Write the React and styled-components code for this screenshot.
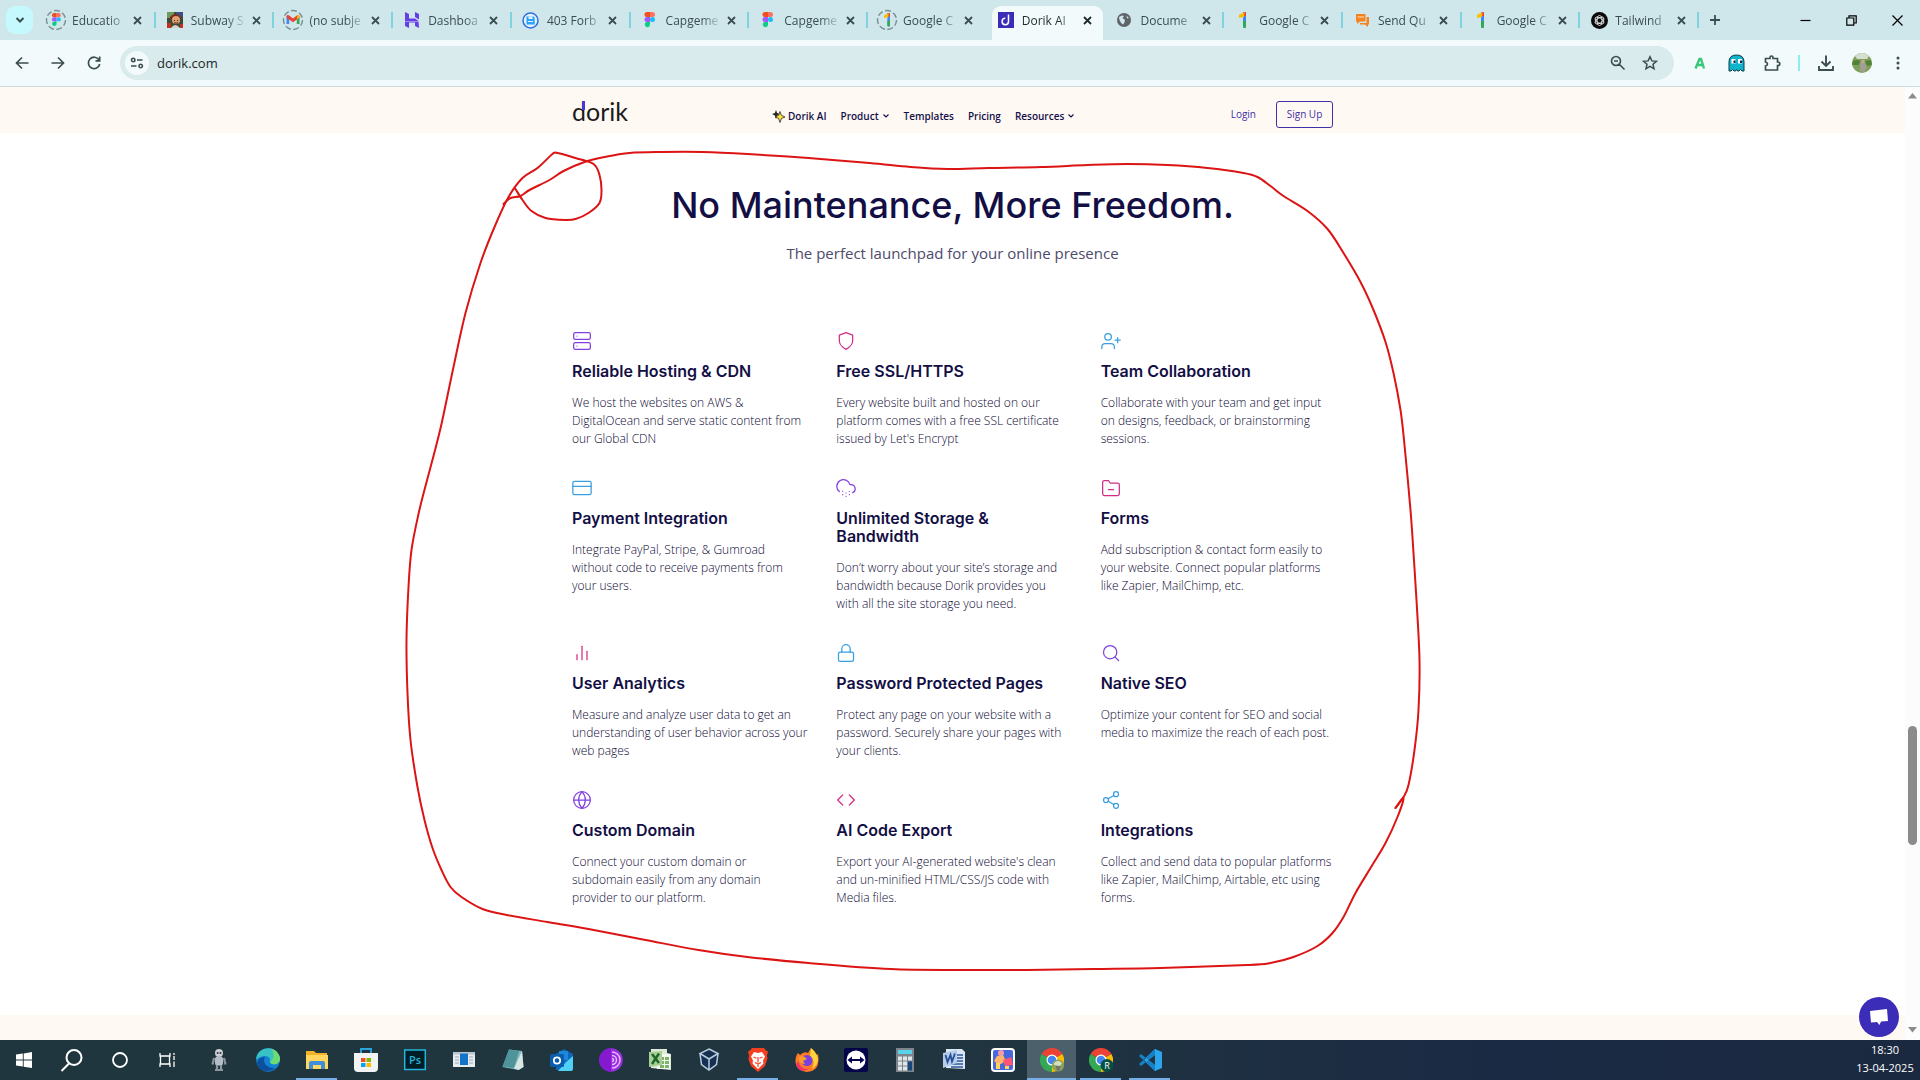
import React from "react";
import styled, { createGlobalStyle, css } from "styled-components";
import {
  FiServer, FiShield, FiUserPlus, FiCreditCard, FiCloudSnow, FiFolderMinus,
  FiBarChart2, FiLock, FiSearch, FiGlobe, FiCode, FiShare2,
} from "react-icons/fi";

const uiFont = `"Open Sans", "Noto Sans", sans-serif`;
const displayFont = `Inter, "Liberation Sans", sans-serif`;

const GlobalStyle = createGlobalStyle`
  *, *::before, *::after { box-sizing: border-box; }
  body { margin: 0; background: #fff; font-family: ${uiFont}; }
  button, input { font: inherit; color: inherit; border: 0; padding: 0; margin: 0; background: none; }
  a { color: inherit; text-decoration: none; }
  h1, h2, h3, p { margin: 0; }
  svg { display: block; flex: none; }
`;

const Desktop = styled.div`
  display: flex;
  flex-direction: column;
  height: 100vh;
  overflow: hidden;
`;

/* ---------- Browser chrome ---------- */

const TabStrip = styled.div`
  display: flex;
  flex: none;
  height: 40px;
  background: #cfe6ea;
  color: #3a4e51;
`;

const TabSearch = styled.button`
  display: grid;
  place-items: center;
  width: 27px;
  height: 28px;
  margin: 6px 4px 6px 6px;
  border-radius: 9px;
  background: #c6f9fd;
`;

const Tabs = styled.div`
  display: flex;
  flex: 1;
  min-width: 0;
`;

const TabItem = styled.div`
  position: relative;
  display: flex;
  align-items: center;
  flex: 1 1 0;
  min-width: 0;
  padding: 0 12px 0 8px;
  margin-top: ${(p) => (p.$active ? "6px" : "0")};
  padding-bottom: ${(p) => (p.$active ? "6px" : "0")};
  ${(p) =>
    p.$active &&
    css`
      color: #1d2b2e;
      &::before {
        content: "";
        position: absolute;
        z-index: 0;
        inset: 0 2px 0 5px;
        border-radius: 9px 9px 0 0;
        background: #f3fafb;
      }
    `}
  ${(p) =>
    p.$divided &&
    css`
      &::after {
        content: "";
        position: absolute;
        right: 0;
        top: 12px;
        width: 2px;
        height: 16px;
        background: #80d3dc;
      }
    `}
`;

const TabIcon = styled.span`
  position: relative;
  display: grid;
  place-items: center;
  width: 22px;
  height: 22px;
  margin-right: 5px;
`;

const TabTitle = styled.span`
  position: relative;
  flex: 1;
  min-width: 0;
  padding-top: 2px;
  overflow: hidden;
  white-space: nowrap;
  font-size: 12px;
  line-height: 18px;
  mask-image: linear-gradient(to right, #000 65%, rgba(0, 0, 0, 0.1) 98%);
`;

const TabClose = styled.button`
  position: relative;
  display: grid;
  place-items: center;
  width: 12px;
  height: 16px;
  margin-left: 4px;
`;

const NewTab = styled.button`
  display: grid;
  place-items: center;
  width: 32px;
`;

const WindowButtons = styled.div`
  display: flex;
  margin-left: 51px;
  color: #000;
`;

const WindowButton = styled.button`
  display: grid;
  place-items: center;
  width: 46px;
`;

const Toolbar = styled.div`
  display: flex;
  align-items: center;
  flex: none;
  height: 47px;
  padding: 0 4px;
  background: #f3fafb;
  border-bottom: 1px solid #ccdcdf;
  color: #3a4e51;
`;

const ToolButton = styled.button`
  display: grid;
  place-items: center;
  width: 36px;
  height: 32px;
`;

const Omnibox = styled.label`
  display: flex;
  align-items: center;
  flex: 1;
  height: 34px;
  margin: 0 8px;
  padding: 0 8px 0 5px;
  border-radius: 17px;
  background: #d9ebed;
`;

const SiteInfo = styled.button`
  display: grid;
  place-items: center;
  width: 24px;
  height: 24px;
  border-radius: 50%;
  background: #f3fafb;
`;

const Address = styled.input`
  flex: 1;
  margin-left: 8px;
  font-size: 13px;
  line-height: 20px;
  color: #1b2629;
  outline: none;
`;

const OmniButton = styled.button`
  display: grid;
  place-items: center;
  width: 32px;
  height: 28px;
`;

const ToolDivider = styled.span`
  width: 2px;
  height: 16px;
  margin: 0 8px;
  background: #8deef2;
`;

/* ---------- Web page ---------- */

const Viewport = styled.div`
  display: flex;
  flex: 1;
  min-height: 0;
`;

const Page = styled.div`
  position: relative;
  display: flex;
  flex-direction: column;
  flex: 1;
  min-width: 0;
  overflow: hidden;
  background: #fff;
`;

const SiteHeader = styled.header`
  flex: none;
  background: #fff9f3;
`;

const Container = styled.div`
  width: 100%;
  max-width: 761px;
  margin: 0 auto;
`;

const HeaderRow = styled(Container)`
  display: flex;
  align-items: center;
  height: 46px;
  padding-top: 12px;
`;

const Logo = styled.a`
  position: relative;
  flex: 0 0 200px;
  padding-bottom: 10px;
  font-family: Lato, sans-serif;
  font-size: 25px;
  line-height: 24px;
  color: #1c1a20;
  &::after {
    content: "";
    position: absolute;
    left: 10px;
    top: 2px;
    width: 3px;
    height: 9px;
    background: #4a35d8;
  }
`;

const Menu = styled.nav`
  display: flex;
  gap: 14px;
  font-size: 10px;
  font-weight: 600;
  line-height: 16px;
  color: #14104a;
`;

const MenuLink = styled.a`
  display: flex;
  align-items: center;
  gap: 3px;
`;

const Account = styled.div`
  display: flex;
  align-items: center;
  gap: 20px;
  margin-left: auto;
  padding-bottom: 4px;
  font-size: 10px;
  line-height: 14px;
  color: #3f2fa8;
`;

const SignUp = styled.button`
  width: 57px;
  height: 27px;
  border: 1px solid #3f2fa8;
  border-radius: 3px;
`;

const Main = styled.main`
  flex: 1;
  padding-top: 50px;
`;

const Title = styled.h2`
  text-align: center;
  font-family: ${displayFont};
  font-size: 36px;
  font-weight: 500;
  line-height: 44px;
  color: #130f45;
`;

const Subtitle = styled.p`
  margin-top: 14px;
  text-align: center;
  font-size: 15px;
  line-height: 24px;
  color: #4d4a6b;
`;

const FeatureGrid = styled(Container)`
  display: grid;
  grid-template-columns: repeat(3, 1fr);
  gap: 30px 29px;
  max-width: 767px;
  margin-top: 66px;
  padding-left: 3px;
`;

const Feature = styled.article`
  > svg {
    color: ${(p) => p.$tone};
    stroke-width: 1.5;
  }
`;

const FeatureTitle = styled.h3`
  margin: 11px 0 14px;
  font-family: ${displayFont};
  font-size: 16px;
  font-weight: 600;
  line-height: 18px;
  color: #130f45;
`;

const FeatureText = styled.p`
  font-size: 12px;
  font-weight: 300;
  line-height: 18px;
  color: #0c0834;
`;

const NextSection = styled.footer`
  flex: none;
  height: 25px;
  background: #fff9f3;
`;

const Markup = styled.svg`
  position: absolute;
  top: 0;
  left: 50%;
  transform: translateX(-50%);
  pointer-events: none;
`;

const ChatButton = styled.button`
  position: absolute;
  right: 6px;
  bottom: 3px;
  display: grid;
  place-items: center;
  width: 40px;
  height: 40px;
  border-radius: 50%;
  background: #3b2db8;
`;

const ScrollTrack = styled.div`
  display: flex;
  flex-direction: column;
  align-items: center;
  flex: none;
  width: 15px;
  padding: 6px 0 7px;
  background: #fcfcfc;
`;

const ScrollGutter = styled.div`
  display: flex;
  flex-direction: column;
  flex: 1;
`;

const ScrollThumb = styled.div`
  width: 9px;
  flex: 0 0 119px;
  border-radius: 5px;
  background: #8b8b8b;
`;

const ScrollSpace = styled.div`
  flex: ${(p) => p.$grow};
`;

/* ---------- Taskbar ---------- */

const Taskbar = styled.div`
  display: flex;
  flex: none;
  height: 40px;
  background: linear-gradient(to right, #20363e 0%, #20353f 50%, #1b2a44 78%, #1b2940 100%);
`;

const SystemButtons = styled.div`
  display: flex;
  margin-right: 2px;
`;

const TaskButton = styled.button`
  position: relative;
  display: grid;
  place-items: center;
  width: ${(p) => (p.$system ? "48px" : "49px")};
  background: ${(p) => (p.$active ? "#4b606a" : "transparent")};
  ${(p) =>
    p.$open &&
    css`
      &::after {
        content: "";
        position: absolute;
        left: ${p.$active ? "0" : "4px"};
        right: ${p.$active ? "0" : "4px"};
        bottom: 0;
        height: 2px;
        background: #76aee8;
      }
    `}
`;

const Clock = styled.time`
  display: flex;
  flex-direction: column;
  justify-content: center;
  margin-left: auto;
  width: 70px;
  padding-bottom: 2px;
  text-align: center;
  white-space: nowrap;
  font-size: 11px;
  line-height: 18px;
  color: #fff;
`;

/* ---------- Small drawings ---------- */

const Ring = ({ children }) => (
  <svg width="22" height="22" viewBox="0 0 22 22">
    <circle cx="11" cy="11" r="9.5" fill="none" stroke="#7a8d92" strokeWidth="1.4" strokeDasharray="6 2.5" />
    {children}
  </svg>
);

const figmaShapes = (
  <>
    <path d="M3 0h3v5H3a2.5 2.5 0 0 1 0-5z" fill="#f24e1e" />
    <path d="M6 0h2.500a2.500 2.500 0 0 1 0 5H6z" fill="#ff7262" />
    <path d="M3 5h3v5H3a2.500 2.500 0 0 1 0-5z" fill="#a259ff" />
    <circle cx="8.500" cy="7.500" r="2.500" fill="#1abcfe" />
    <path d="M3 10h3v2.500a2.600 2.600 0 1 1-3-2.500z" fill="#0acf83" />
  </>
);

const oneShapes = (
  <>
    <path d="M4 0h3v14.500a1.500 1.500 0 0 1-3 0z" fill="#4285f4" />
    <path d="M4 9h3v5.500a1.500 1.500 0 0 1-3 0z" fill="#34a853" />
    <path d="M4 0h1.500A1.500 1.500 0 0 1 7 1.500V4H4z" fill="#ea4335" />
    <path d="M5.500 0L0 3v3l5-1z" fill="#fbbc04" />
  </>
);

const favicons = {
  figmaRing: <Ring><g transform="translate(6.500 4) scale(.85)">{figmaShapes}</g></Ring>,
  figma: <svg width="16" height="16" viewBox="-2 0 16 16">{figmaShapes}</svg>,
  oneRing: <Ring><g transform="translate(8 4) scale(.85)">{oneShapes}</g></Ring>,
  one: <svg width="16" height="16" viewBox="-4 0 16 16">{oneShapes}</svg>,
  subway: (
    <svg width="16" height="16">
      <rect width="16" height="16" fill="#3c4a3a" />
      <path d="M0 0h7v6H0z" fill="#6f9a5c" />
      <path d="M9 0h7v5H9z" fill="#3e4f7e" />
      <path d="M3 5q5-6 11 0v2H3z" fill="#7a2c18" />
      <circle cx="9" cy="8" r="4" fill="#e0a172" />
      <path d="M4 16q4-6 9 0z" fill="#d9d2c8" />
      <path d="M0 11h4v5H0zM13 12h3v4h-3z" fill="#c4301c" />
      <path d="M7 8h1v1H7zM10 8h1v1h-1zM7 10.500h4v1H7z" fill="#502010" />
    </svg>
  ),
  gmail: (
    <Ring>
      <path d="M4.500 7v8h2.700V9.500z" fill="#4285f4" />
      <path d="M17.500 7v8h-2.700V9.500z" fill="#34a853" />
      <path d="M4.500 7q1-1.800 2.700-.5L11 9.500l3.800-3q1.700-1.300 2.700.5l-.2 1.700L11 13.200 4.700 8.700z" fill="#ea4335" />
      <path d="M15 6.500q1.500-1.300 2.500.5v1.500L15 10.300z" fill="#fbbc04" />
    </Ring>
  ),
  hostinger: (
    <svg width="16" height="16">
      <path d="M1 0l4 2v4.500h6L14.500 9H1zM11 0l4 2v5.500L11 5zM1 9.500h13.500L15 16l-4-2v-3.500H5V16l-4-2z" fill="#673de6" />
    </svg>
  ),
  disk: (
    <svg width="17" height="17" viewBox="0 0 17 17">
      <circle cx="8.500" cy="8.500" r="7.500" fill="#e6f2ff" stroke="#2f6fe4" strokeWidth="1.500" />
      <path d="M4.500 4.500h7l1.200 1.200v6.800h-8.200z" fill="#2aa4f4" />
      <path d="M6.500 4.500h4v2.500h-4zM6 9h5v1H6z" fill="#e6f2ff" />
    </svg>
  ),
  dorik: (
    <svg width="16" height="16">
      <rect width="16" height="16" fill="#3b2db8" />
      <path d="M10.500 2.500v7a3.200 3.200 0 1 1-3.200-3.200" fill="none" stroke="#fff" strokeWidth="1.500" />
    </svg>
  ),
  globe: (
    <svg width="16" height="16">
      <circle cx="8" cy="8" r="7" fill="#5f6368" />
      <path d="M3 5q3-2.500 5-1L6.500 6l2.500 2-.5 2.500L7 12.500Q4.500 11 3.500 8zM10.500 3.500l2.500 2.500-2 .5z" fill="#cfe6ea" />
    </svg>
  ),
  chat: (
    <svg width="16" height="16">
      <path d="M2 2h9.500v7.500H6L3 12V9.500H2z" fill="#f5831f" />
      <path d="M12.500 5H15v7.500h-1V15l-3-2.500H6V11h6.500z" fill="#f5831f" />
      <path d="M3.500 5h6.500" stroke="#ffe0c0" />
    </svg>
  ),
  gpt: (
    <svg width="17" height="17" viewBox="0 0 17 17">
      <circle cx="8.500" cy="8.500" r="8.500" fill="#0a0a0a" />
      <g fill="none" stroke="#fff" strokeWidth=".8">
        <ellipse cx="8.500" cy="8.500" rx="2.500" ry="5" />
        <ellipse cx="8.500" cy="8.500" rx="2.500" ry="5" transform="rotate(60 8.500 8.500)" />
        <ellipse cx="8.500" cy="8.500" rx="2.500" ry="5" transform="rotate(120 8.500 8.500)" />
      </g>
    </svg>
  ),
};

const Line = ({ size = 16, width = 1.6, box = 16, d, fill = "none" }) => (
  <svg width={size} height={size} viewBox={`0 0 ${box} ${box}`} fill={fill} stroke="currentColor" strokeWidth={width}>
    <path d={d} />
  </svg>
);

const Chevron = () => <Line size={8} box={8} width={1.1} d="M1.500 2.500L4 5l2.500-2.500" />;

const tabs = [
  ["Educatio", "figmaRing"], ["Subway S", "subway"], ["(no subje", "gmail"],
  ["Dashboa", "hostinger"], ["403 Forb", "disk"], ["Capgeme", "figma"],
  ["Capgeme", "figma"], ["Google C", "oneRing"], ["Dorik AI", "dorik"],
  ["Docume", "globe"], ["Google C", "one"], ["Send Qu", "chat"],
  ["Google C", "one"], ["Tailwind", "gpt"],
];
const activeTab = 8;

const purple = "#8040e0";
const pink = "#d12e86";
const blue = "#389fe0";

const features = [
  [FiServer, purple, "Reliable Hosting & CDN", "We host the websites on AWS & DigitalOcean and serve static content from our Global CDN"],
  [FiShield, pink, "Free SSL/HTTPS", "Every website built and hosted on our platform comes with a free SSL certificate issued by Let's Encrypt"],
  [FiUserPlus, blue, "Team Collaboration", "Collaborate with your team and get input on designs, feedback, or brainstorming sessions."],
  [FiCreditCard, blue, "Payment Integration", "Integrate PayPal, Stripe, & Gumroad without code to receive payments from your users."],
  [FiCloudSnow, purple, "Unlimited Storage & Bandwidth", "Don’t worry about your site’s storage and bandwidth because Dorik provides you with\u00a0all the site storage you need."],
  [FiFolderMinus, pink, "Forms", "Add subscription & contact form easily to your website. Connect popular platforms like Zapier, MailChimp, etc."],
  [FiBarChart2, pink, "User Analytics", "Measure and analyze user data to get an understanding of user behavior across your web pages"],
  [FiLock, blue, "Password Protected Pages", "Protect any page on your website with a password. Securely share your pages with your clients."],
  [FiSearch, purple, "Native SEO", "Optimize your content for SEO and social media to maximize the reach of each post."],
  [FiGlobe, purple, "Custom Domain", "Connect your custom domain or subdomain easily from any domain provider to our platform."],
  [FiCode, pink, "AI Code Export", "Export your AI-generated website's clean and un-minified HTML/CSS/JS code with Media files."],
  [FiShare2, blue, "Integrations", "Collect and send data to popular platforms like Zapier, MailChimp, Airtable, etc using forms."],
];

/* Pen strokes of the hand-drawn loop, joined by a Catmull-Rom curve. */
const smooth = (pts) => {
  let d = `M${pts[0][0]} ${pts[0][1]}`;
  for (let i = 0; i < pts.length - 1; i++) {
    const a = pts[Math.max(i - 1, 0)];
    const b = pts[i];
    const c = pts[i + 1];
    const e = pts[Math.min(i + 2, pts.length - 1)];
    d += `C${b[0] + (c[0] - a[0]) / 6} ${b[1] + (c[1] - a[1]) / 6} ${c[0] - (e[0] - b[0]) / 6} ${c[1] - (e[1] - b[1]) / 6} ${c[0]} ${c[1]}`;
  }
  return d;
};

const strokeOne = [
  [503, 204], [510, 198], [520, 196], [529, 190], [549, 180], [563, 171], [584, 162], [604, 157], [629, 153],
  [661, 152], [702, 152], [747, 154], [808, 158], [869, 163], [910, 167], [947, 169], [988, 168], [1040, 167],
  [1087, 165], [1127, 164], [1167, 165], [1207, 168], [1243, 173], [1257, 177], [1270, 186], [1283, 196],
  [1307, 211], [1327, 229], [1343, 253], [1360, 282], [1373, 310], [1385, 342], [1393, 373], [1400, 410],
  [1404, 445], [1410, 510], [1413, 553], [1416, 600], [1419, 660], [1418, 710], [1414, 750],
  [1408, 785], [1403, 797], [1395, 808],
];
const strokeTwo = [
  [1395, 808], [1403, 798], [1397, 817], [1385, 843], [1370, 868], [1355, 893], [1343, 917], [1332, 933],
  [1317, 946], [1293, 957], [1270, 963], [1247, 965], [1160, 968], [1093, 969], [1027, 970], [960, 970],
  [890, 969], [808, 963], [747, 957], [698, 950], [645, 940], [588, 929], [547, 922], [506, 915], [482, 909],
  [461, 897], [450, 887], [441, 870], [432, 848], [424, 820], [417, 787], [410, 740], [407, 693], [406, 640],
  [408, 587], [411, 550], [418, 514], [425, 486], [433, 456], [441, 424], [453, 367], [465, 313], [480, 263],
  [494, 227], [508, 197], [522, 178], [537, 168], [552, 154], [557, 153], [575, 158], [593, 164], [599, 175],
  [601, 190], [599, 203], [588, 213], [575, 219], [565, 220], [545, 218], [531, 211], [522, 200], [515, 189],
];

const chromeWheel = (
  <>
    <path d="M12 12L1.600 6A12 12 0 0 1 22.400 6z" fill="#ea4335" />
    <path d="M12 12L22.400 6A12 12 0 0 1 12 24z" fill="#fbbc04" />
    <path d="M12 12v12A12 12 0 0 1 1.600 6z" fill="#34a853" />
    <circle cx="12" cy="12" r="5.500" fill="#fff" />
    <circle cx="12" cy="12" r="4.300" fill="#4285f4" />
  </>
);

const Icon24 = ({ children }) => <svg width="24" height="24" viewBox="0 0 24 24">{children}</svg>;

const systemApps = [
  ["Start", <Icon24><path d="M4 6.500l6.800-1v6H4zM11.700 5.400L20 4v7.500h-8.300zM4 12.400h6.800v6l-6.800-1zM11.700 12.400H20V20l-8.300-1.300z" fill="#fff" /></Icon24>],
  ["Search", <Icon24><g fill="none" stroke="#fff" strokeWidth="2"><circle cx="14" cy="9.500" r="7.500" /><path d="M9 15.500L1.500 23" /></g></Icon24>],
  ["Cortana", <Icon24><circle cx="12" cy="12" r="7" fill="none" stroke="#fff" strokeWidth="1.800" /></Icon24>],
  ["Task view", <Icon24><path d="M4 5v3h10V5M4 19v-3h10v3M4.500 8h9v8h-9zM18 5v2M18 8v4M18 13.500V19" fill="none" stroke="#fff" strokeWidth="1.300" /></Icon24>],
];

const apps = [
  ["Robot", <Icon24><circle cx="12" cy="5" r="4" fill="#c9ced3" /><circle cx="10.700" cy="5" r="1" fill="#334" /><circle cx="13.500" cy="5" r="1" fill="#334" /><rect x="8" y="8.500" width="8" height="9" rx="2.500" fill="#b4bdc5" /><path d="M7 10l-1.500 6.500M17 10l1.500 6.500M10 17v5M14 17v5M8 22h8" stroke="#8b959e" strokeWidth="2.200" /></Icon24>],
  ["Edge", <Icon24><circle cx="12" cy="12" r="11.800" fill="#1282d3" /><path d="M.2 12C0 4 7 0 13 .3S24 6 24 11c0 4-4 6-8 5-3-1-2-2-2-4s-2-4-5-4-8 2-8.800 4z" fill="#39c2c4" /><path d="M15 .7C21 2 24 7 24 11c0 4-4 6-8 5-2-.8-1.500-2-1.500-3C18 12 19 5 15 .7z" fill="#6edb70" /><path d="M9 9c-3 5 1 11 10 11-5 5-17 4-18-5 1-4 4-6 8-6z" fill="#0c4f9e" /></Icon24>],
  ["File Explorer", <Icon24><path d="M1 3h8l2 2h11v16H1z" fill="#f0b429" /><path d="M1 7h22v14H1z" fill="#ffd75e" /><path d="M4 21v-6q0-2 2-2h12q2 0 2 2v6h-4v-4H8v4z" fill="#3f8edb" /></Icon24>, true],
  ["Store", <Icon24><path d="M7 6V1h10v5" fill="none" stroke="#2aa7e0" strokeWidth="1.800" /><path d="M0 5h24v15q0 4-4 4H4q-4 0-4-4z" fill="#f1f3f5" /><path d="M7 10h4.500v4H7z" fill="#f25022" /><path d="M12.500 10H17v4h-4.500z" fill="#7fba00" /><path d="M7 15h4.500v4H7z" fill="#00a4ef" /><path d="M12.500 15H17v4h-4.500z" fill="#ffb900" /></Icon24>],
  ["Photoshop", <Icon24><rect x="1.700" y="2" width="20.600" height="19.500" fill="#001d26" stroke="#21b6dd" strokeWidth="1.500" /><text x="12" y="16" textAnchor="middle" fontFamily="Open Sans" fontSize="11" fontWeight="600" fill="#21b6dd">Ps</text></Icon24>],
  ["Run", <Icon24><path d="M1 4h22v15H1z" fill="#e8ecef" /><path d="M1 4h22v2.500H1z" fill="#b9c6cf" /><path d="M3 9h4M3 12h4M3 15h4M17 9h4M17 12h4M17 15h4" stroke="#9aa9b2" /><path d="M8 5.500h8V17H8z" fill="#1273c9" /></Icon24>],
  ["Notes", <Icon24><path d="M8 1.500L21 3l1.500 16-5 3L1.500 19z" fill="#7db8bd" /><path d="M8 1.500l10 1.500-5 17-11.500-1.500z" fill="#4f939b" /><path d="M21 3l1.500 16-5 3-4.500-1.500z" fill="#d8e6e4" /></Icon24>],
  ["Outlook", <Icon24><path d="M6 6l8-5 9 5v16H6z" fill="#1066b8" /><path d="M9 3h9v9H9z" fill="#1d87dc" /><path d="M23 8v13q0 2-2 2H8l8-9z" fill="#50d0f5" /><rect y="6" width="14" height="13" rx="1.500" fill="#0a5cad" /><circle cx="7" cy="12.500" r="3.200" fill="none" stroke="#fff" strokeWidth="1.700" /></Icon24>],
  ["Tor Browser", <Icon24><circle cx="12" cy="12" r="11.800" fill="#9b2fe0" /><path d="M12 .2a11.800 11.800 0 0 0 0 23.600z" fill="#8419cf" /><path d="M13 4a8 8 0 0 1 0 16M13 7.500a4.500 4.500 0 0 1 0 9M13 10.500a1.500 1.500 0 0 1 0 3" fill="none" stroke="#e4baff" strokeWidth="1.500" /></Icon24>],
  ["Excel", <Icon24><path d="M3 1h16v4l4 1v16l-20-2z" fill="#dcebd5" /><path d="M9 6h13v15H9z" fill="#f3f8f0" /><path d="M12 9h4v3h-4zM17 9h4v3h-4zM12 13h4v3h-4zM17 13h4v3h-4zM12 17h4v3h-4zM17 17h4v3h-4z" fill="#7db567" /><path d="M1 4l13-1v14L1 19z" fill="#a8cf98" /><path d="M4 6l7 9M11 5.500L4 16" stroke="#21692a" strokeWidth="2.500" /></Icon24>],
  ["VirtualBox", <Icon24><path d="M12 1l9 4.500-1 11L12 23l-8-6.500-1-11z" fill="#173052" /><path d="M12 1l9 4.500L12 11 3 5.500zM12 11v11M3 5.500l1.500 11L12 22l7.500-5.500L21 5.500" fill="none" stroke="#b9cdde" strokeWidth="1.500" /></Icon24>],
  ["Brave", <Icon24><path d="M6 0h12l2 2.500 2 1-1 4 .5 3L19 18l-7 6-7-6-2.500-6.500L3 7.500l-1-4 2-1z" fill="#f4401e" /><path d="M8 4l4 1 4-1 3 4.500-2 4 .5 3-5.500 5.500-5.500-5.500.500-3-2-4z" fill="#fff" /><path d="M7.500 9l3 1.200M16.500 9l-3 1.200M12 9v5.500M9 14.500l3 1.500 3-1.500M12 16v3" fill="none" stroke="#f4401e" strokeWidth="1.200" /></Icon24>, true],
  ["Firefox", <Icon24><path d="M3 5l2 2q4-4 8-2l3-5q5 4 5 7l2-1q3 17-11 18Q0 23 .500 12 1 7 3 5z" fill="#ff7a24" /><path d="M16 0q7 6 7 12-1 6-6 9 4-8-2-13z" fill="#ffd43a" /><path d="M3 13q3 9 11 8-9 5-13-4z" fill="#f0356c" /><circle cx="12" cy="12.500" r="5.500" fill="#7a3fe0" /><path d="M4 9q5-2 8 2l-4 2 2 3q-7 0-6-7z" fill="#ff9c2e" /></Icon24>],
  ["TeamViewer", <Icon24><rect width="24" height="24" rx="2" fill="#04044a" /><circle cx="12" cy="12" r="9.500" fill="#fff" /><path d="M3.500 12L8 8.500V11h8V8.500l4.500 3.500-4.500 3.500V13H8v2.500z" fill="#04044a" /></Icon24>],
  ["Calculator", <Icon24><rect x="3" width="18" height="24" fill="#7b858b" /><path d="M5 2h14v4H5z" fill="#59d3ea" /><path d="M5 8.500h4v4H5zM10 8.500h4v4h-4zM15 8.500h4v4h-4zM5 13.500h4v4H5zM10 13.500h4v4h-4zM5 18.500h4v4H5zM10 18.500h4v4h-4z" fill="#dfe5e8" /><path d="M15 13.500h4v9h-4z" fill="#17467e" /></Icon24>],
  ["Word", <Icon24><path d="M4 1h16l3 3v17l-19-1z" fill="#dbe6f5" /><path d="M14 7h7M14 10h7M14 13h7M9 16h12M9 19h12" stroke="#2b579a" strokeWidth="1.500" /><path d="M1 5l14-3v13L1 20z" fill="#b4cbea" /><path d="M3.500 7l2 7 3-7 1.500 6.500 3-8" fill="none" stroke="#244f96" strokeWidth="1.800" /></Icon24>],
  ["Snip", <Icon24><rect width="24" height="24" rx="4" fill="#fff" /><rect x="2" y="2" width="20" height="20" rx="2" fill="#4668dd" /><circle cx="10" cy="5" r="3" fill="#f59aa8" /><path d="M6 8l6-1 3 6-7 4-5-4z" fill="#ffb46a" /><path d="M12 12l8-3 2 8-8 1z" fill="#ff5573" /><path d="M5 15h4v6H5zM14 18h4v3h-4z" fill="#ffd45a" /></Icon24>],
  ["Chrome", <Icon24>{chromeWheel}<circle cx="18" cy="17.500" r="6" fill="#8ba35b" /><path d="M14 15q4-4 8 0l-2 3-6-1z" fill="#d3dfc2" /><path d="M16 18h5l-2 5q-3 0-3-5z" fill="#75736b" /></Icon24>, true, true],
  ["Chrome R", <Icon24>{chromeWheel}<circle cx="18" cy="17.500" r="6.500" fill="#064f43" /><text x="18" y="21" textAnchor="middle" fontFamily="Open Sans" fontSize="9" fill="#fff">R</text></Icon24>, true],
  ["Visual Studio Code", <Icon24><path d="M17 1L6 12l11 11 7-3V4z" fill="#2ca5ec" /><path d="M17 7l-7 5 7 5z" fill="#20353f" /><path d="M1 8l2-2 14 11v6zM1 16l2 2L17 7V1z" fill="#1581c9" /></Icon24>, true],
];

export default function App() {
  return (
    <Desktop>
      <GlobalStyle />
      <TabStrip>
        <TabSearch aria-label="Search tabs"><Line size={12} box={12} width={2} d="M2.500 4L6 7.500 9.500 4" /></TabSearch>
        <Tabs>
          {tabs.map(([title, icon], i) => (
            <TabItem key={i} $active={i === activeTab} $divided={i !== activeTab && i !== activeTab - 1}>
              <TabIcon>{favicons[icon]}</TabIcon>
              <TabTitle>{title}</TabTitle>
              <TabClose aria-label={`Close ${title}`}><Line size={9} box={9} width={1.8} d="M1 1l7 7M8 1L1 8" /></TabClose>
            </TabItem>
          ))}
        </Tabs>
        <NewTab aria-label="New tab"><Line size={12} box={12} width={1.8} d="M6 1v10M1 6h10" /></NewTab>
        <WindowButtons>
          <WindowButton aria-label="Minimize"><Line size={11} box={11} width={1.2} d="M.5 5.500h10" /></WindowButton>
          <WindowButton aria-label="Restore"><Line size={11} box={11} width={1.2} d="M.8 3h7v7.200h-7zM3 3V.8h7.200V8H8" /></WindowButton>
          <WindowButton aria-label="Close"><Line size={11} box={11} width={1.2} d="M.5 .5l10 10M10.500 .5l-10 10" /></WindowButton>
        </WindowButtons>
      </TabStrip>

      <Toolbar>
        <ToolButton aria-label="Back"><Line width={1.7} d="M14.500 8H2.500M8 2.500L2.500 8 8 13.500" /></ToolButton>
        <ToolButton aria-label="Forward"><Line width={1.7} d="M1.500 8h12M8 2.500L13.500 8 8 13.500" /></ToolButton>
        <ToolButton aria-label="Reload"><Line width={1.7} d="M13 5A5.700 5.700 0 1 0 13.700 9M13.700 1.500v4.300H9.500" /></ToolButton>
        <Omnibox>
          <SiteInfo aria-label="Site information">
            <Line size={14} box={14} width={1.6} d="M1.500 4a1.700 1.700 0 1 0 3.400 0 1.700 1.700 0 1 0-3.400 0M7 4h5.500M1 10h5.500M9 10a1.700 1.700 0 1 0 3.400 0A1.700 1.700 0 1 0 9 10" />
          </SiteInfo>
          <Address aria-label="Address" defaultValue="dorik.com" />
          <OmniButton aria-label="Zoom"><Line width={1.6} d="M10.500 6a4.500 4.500 0 1 1-9 0 4.500 4.500 0 1 1 9 0M9.300 9.300L14.500 14.500M4 6h4" /></OmniButton>
          <OmniButton aria-label="Bookmark"><Line width={1.5} d="M8 1.700l1.900 4.200 4.500.4L11 9.300l1 4.500-4-2.400-4 2.400 1-4.500L1.600 6.300l4.500-.4z" /></OmniButton>
        </Omnibox>
        <ToolButton aria-label="Grammar extension">
          <svg width="14" height="14"><path d="M2.500 12.500L6.500 3h1.500L11 12.500M4.500 9h6" fill="none" stroke="#3bc779" strokeWidth="2.400" /></svg>
        </ToolButton>
        <ToolButton aria-label="Ghost extension">
          <svg width="17" height="18" viewBox="0 0 17 18">
            <path d="M1 8q0-7 7.500-7T16 8v9h-2l-1.500-1.500L11 17H9.500l-1-1.500-1 1.500H6l-1.500-1.500L3 17H1z" fill="#0fb3cb" stroke="#0b3d49" />
            <path d="M3.500 5h4v4.500h-4zM10 5h4v4.500h-4z" fill="#fff" />
            <path d="M5.500 6.500h2V9h-2zM12 6.500h2V9h-2z" fill="#12204a" />
          </svg>
        </ToolButton>
        <ToolButton aria-label="Extensions"><Line width={1.7} size={18} box={18} d="M2.500 4.500H7V3.500a1.500 1.500 0 0 1 3 0v1h4.500V8h.5a1.500 1.500 0 0 1 0 3.500h-.5V16h-12v-4q2-.5 2-2t-2-2z" /></ToolButton>
        <ToolDivider />
        <ToolButton aria-label="Downloads"><Line width={1.9} d="M8 .5v10M3.500 6.500L8 11l4.500-4.500M1 11v4h14v-4" /></ToolButton>
        <ToolButton aria-label="Profile">
          <svg width="20" height="20" viewBox="0 0 20 20">
            <circle cx="10" cy="10" r="10" fill="#7fa05a" />
            <path d="M3 3q7-6 14 0l-2 3H5z" fill="#d5dfcf" />
            <path d="M1 8q4-2 7 0l-1 4H0zM13 8l6-1 1 5-5 1z" fill="#4f8438" />
            <path d="M8 10l4-1 3 5-3 5-4-1z" fill="#a39d98" />
            <circle cx="11" cy="8.500" r="1.800" fill="#c9a892" />
          </svg>
        </ToolButton>
        <ToolButton aria-label="Menu"><svg width="4" height="16" fill="currentColor"><circle cx="2" cy="3" r="1.500" /><circle cx="2" cy="8" r="1.500" /><circle cx="2" cy="13" r="1.500" /></svg></ToolButton>
      </Toolbar>

      <Viewport>
        <Page>
          <SiteHeader>
            <HeaderRow>
              <Logo href="#">dorik</Logo>
              <Menu>
                <MenuLink href="#">
                  <svg width="13" height="13" viewBox="0 0 13 13">
                    <path d="M4 0l1.200 3L8 4 5.200 5.500 4 9 2.800 5.500 0 4l2.800-1z" fill="#2b2b2b" />
                    <path d="M8 1.500l1.400 3.800L13 7 9.400 8.500 8 12.500 6.600 8.500 3.200 7l3.400-1.700z" fill="#ffe23e" stroke="#2b2b2b" strokeWidth=".8" />
                  </svg>
                  Dorik AI
                </MenuLink>
                <MenuLink href="#">Product<Chevron /></MenuLink>
                <MenuLink href="#">Templates</MenuLink>
                <MenuLink href="#">Pricing</MenuLink>
                <MenuLink href="#">Resources<Chevron /></MenuLink>
              </Menu>
              <Account>
                <a href="#">Login</a>
                <SignUp>Sign Up</SignUp>
              </Account>
            </HeaderRow>
          </SiteHeader>

          <Main>
            <Title>No Maintenance, More Freedom.</Title>
            <Subtitle>The perfect launchpad for your online presence</Subtitle>
            <FeatureGrid>
              {features.map(([Glyph, tone, title, text]) => (
                <Feature key={title} $tone={tone}>
                  <Glyph size={20} />
                  <FeatureTitle>{title}</FeatureTitle>
                  <FeatureText>{text}</FeatureText>
                </Feature>
              ))}
            </FeatureGrid>
          </Main>
          <NextSection />

          <Markup width="1105" height="928" viewBox="400 87 1105 928" fill="none" stroke="#dc1414" strokeWidth="2" strokeLinejoin="round" strokeLinecap="round">
            <path d={smooth(strokeOne)} />
            <path d={smooth(strokeTwo)} />
          </Markup>
          <ChatButton aria-label="Open chat">
            <svg width="20" height="18"><path d="M1 3l17-2 1 12-7 .500L10.500 17 8 14l-6 .500z" fill="#fff" /></svg>
          </ChatButton>
        </Page>
        <ScrollTrack>
          <svg width="9" height="6"><path d="M4.500 0L9 5.500H0z" fill="#8b8b8b" /></svg>
          <ScrollGutter>
            <ScrollSpace $grow={627} />
            <ScrollThumb />
            <ScrollSpace $grow={182} />
          </ScrollGutter>
          <svg width="9" height="6"><path d="M4.500 5.500L0 0h9z" fill="#8b8b8b" /></svg>
        </ScrollTrack>
      </Viewport>

      <Taskbar>
        <SystemButtons>
          {systemApps.map(([name, icon]) => (
            <TaskButton key={name} aria-label={name} $system>{icon}</TaskButton>
          ))}
        </SystemButtons>
        {apps.map(([name, icon, open, active]) => (
          <TaskButton key={name} aria-label={name} $open={open} $active={active}>{icon}</TaskButton>
        ))}
        <Clock><span>18:30</span><span>13-04-2025</span></Clock>
      </Taskbar>
    </Desktop>
  );
}
